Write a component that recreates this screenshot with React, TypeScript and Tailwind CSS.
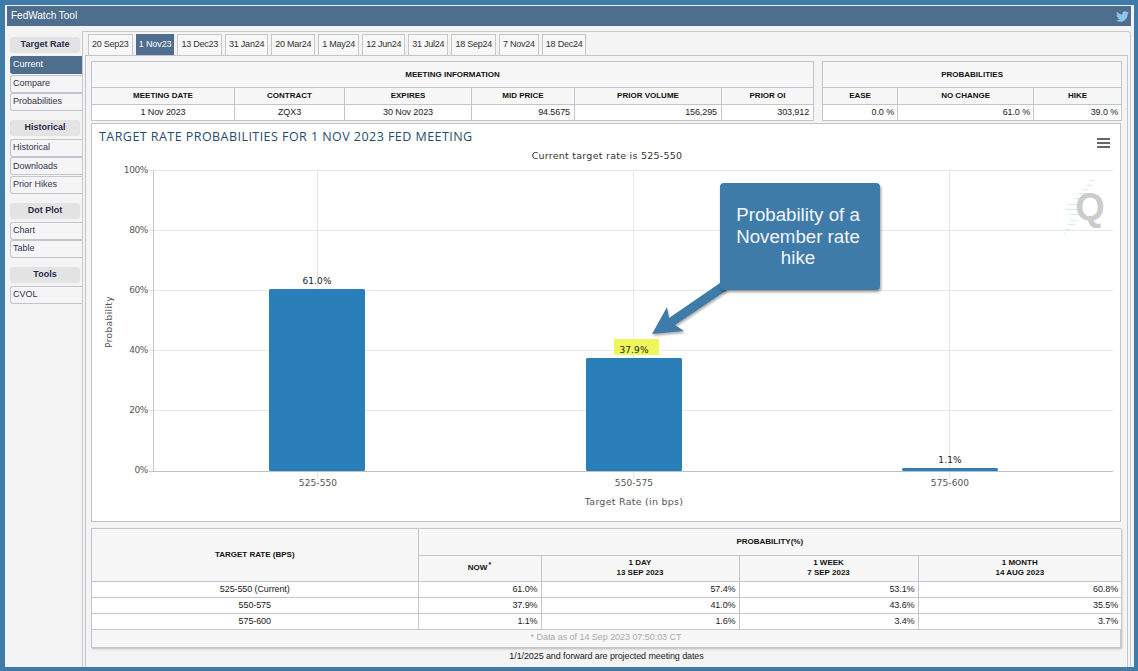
import { FaTwitter } from "react-icons/fa";

const navGroups = [
  { title: "Target Rate", items: ["Current", "Compare", "Probabilities"] },
  { title: "Historical", items: ["Historical", "Downloads", "Prior Hikes"] },
  { title: "Dot Plot", items: ["Chart", "Table"] },
  { title: "Tools", items: ["CVOL"] },
];

const tabs = ["20 Sep23", "1 Nov23", "13 Dec23", "31 Jan24", "20 Mar24", "1 May24", "12 Jun24", "31 Jul24", "18 Sep24", "7 Nov24", "18 Dec24"];

const th = "border border-[#c3c3d2] bg-[#f7f7f7] p-0 text-center text-[8px] font-bold leading-[10px] text-[#111]";
const td = "border border-[#c3c3d2] bg-white p-0 text-[9px] leading-none tracking-[-0.1px] text-[#222]";

const rows = [
  ["525-550 (Current)", "61.0%", "57.4%", "53.1%", "60.8%"],
  ["550-575", "37.9%", "41.0%", "43.6%", "35.5%"],
  ["575-600", "1.1%", "1.6%", "3.4%", "3.7%"],
];

function Sidebar() {
  return (
    <div className="w-[75px] shrink-0 pl-[3px] pt-[6px]">
      {navGroups.map((group) => (
        <div key={group.title} className="mb-[8.75px]">
          <div className="mr-[2px] mb-[3px] flex h-[16px] items-center justify-center rounded-[3px] bg-[#e3e3e3] text-[9px] font-bold text-[#2b2b4b]">
            {group.title}
          </div>
          {group.items.map((item) => (
            <div
              key={item}
              className={
                item === "Current"
                  ? "mb-[0.5px] flex h-[18px] items-center rounded-l-[3px] bg-[#4f6d8d] pl-[3px] text-[9px] text-white"
                  : "mb-[0.5px] flex h-[18px] items-center rounded-l-[3px] border border-r-0 border-[#c3c3d2] bg-[#f5f5f5] pl-[2px] text-[9px] text-[#33334f]"
              }
            >
              {item}
            </div>
          ))}
        </div>
      ))}
    </div>
  );
}

function InfoTables() {
  return (
    <div className="flex gap-[8px]">
      <table className="w-[722px] table-fixed border-collapse">
        <colgroup>
          <col className="w-[143px]" />
          <col className="w-[110px]" />
          <col className="w-[127px]" />
          <col className="w-[103px]" />
          <col className="w-[147px]" />
          <col className="w-[92px]" />
        </colgroup>
        <tbody>
          <tr className="h-[26px]">
            <th colSpan={6} className={th}>MEETING INFORMATION</th>
          </tr>
          <tr className="h-[17px]">
            <th className={th}>MEETING DATE</th>
            <th className={th}>CONTRACT</th>
            <th className={th}>EXPIRES</th>
            <th className={th}>MID PRICE</th>
            <th className={th}>PRIOR VOLUME</th>
            <th className={th}>PRIOR OI</th>
          </tr>
          <tr className="h-[16px]">
            <td className={`${td} text-center`}>1 Nov 2023</td>
            <td className={`${td} text-center`}>ZQX3</td>
            <td className={`${td} text-center`}>30 Nov 2023</td>
            <td className={`${td} pr-[4px] text-right`}>94.5675</td>
            <td className={`${td} pr-[4px] text-right`}>156,295</td>
            <td className={`${td} pr-[4px] text-right`}>303,912</td>
          </tr>
        </tbody>
      </table>
      <table className="w-[299px] table-fixed border-collapse">
        <colgroup>
          <col className="w-[75px]" />
          <col className="w-[136px]" />
          <col className="w-[88px]" />
        </colgroup>
        <tbody>
          <tr className="h-[26px]">
            <th colSpan={3} className={th}>PROBABILITIES</th>
          </tr>
          <tr className="h-[17px]">
            <th className={th}>EASE</th>
            <th className={th}>NO CHANGE</th>
            <th className={th}>HIKE</th>
          </tr>
          <tr className="h-[16px]">
            <td className={`${td} pr-[3px] text-right`}>0.0 %</td>
            <td className={`${td} pr-[3px] text-right`}>61.0 %</td>
            <td className={`${td} pr-[3px] text-right`}>39.0 %</td>
          </tr>
        </tbody>
      </table>
    </div>
  );
}

const gridYs = [170, 230, 290, 350, 410];
const yLabels = ["100%", "80%", "60%", "40%", "20%", "0%"];
const gridXs = [317, 633, 949];
const bars = [
  { x: 269, y: 289, label: "61.0%" },
  { x: 586, y: 358, label: "37.9%" },
  { x: 902, y: 468, label: "1.1%" },
];

// watermark streaks left of the Q: [y, x1, x2]
const streaks = [
  [180, 1090, 1093], [185, 1087, 1092], [189, 1083, 1088], [193, 1079, 1087],
  [198, 1074, 1079], [204, 1068, 1078], [209, 1065, 1078], [214, 1070, 1078],
  [220, 1070, 1077], [224, 1068, 1075], [229, 1066, 1070], [233, 1064, 1066],
];

function Chart() {
  const font = { fontFamily: "'DejaVu Sans', sans-serif" };
  return (
    <div className="relative mt-[2px] h-[399px] w-[1030px] border border-[#c4c4c4] bg-white">
      <svg width="1028" height="397" viewBox="92 124 1028 397" style={font} className="block">
        <text x="99" y="141" fontSize="12.5" fill="#274b6d" letterSpacing="0.45" style={{ fontFamily: "'Open Sans', sans-serif" }}>
          TARGET RATE PROBABILITIES FOR 1 NOV 2023 FED MEETING
        </text>
        <text x="607" y="159" fontSize="9.5" fill="#333" textAnchor="middle" letterSpacing="0.25">Current target rate is 525-550</text>
        <rect x="1097" y="138" width="13" height="2" fill="#666" />
        <rect x="1097" y="142" width="13" height="2" fill="#666" />
        <rect x="1097" y="146" width="13" height="2" fill="#666" />

        {gridYs.map((y) => (
          <line key={y} x1="149" x2="1113" y1={y + 0.5} y2={y + 0.5} stroke="#e8e8e8" />
        ))}
        {gridXs.map((x) => (
          <line key={x} x1={x + 0.5} x2={x + 0.5} y1="170" y2="479" stroke="#e6e6e6" />
        ))}
        <line x1="153.5" x2="153.5" y1="170" y2="471" stroke="#c8c8c8" />
        <line x1="149" x2="1113" y1="471.5" y2="471.5" stroke="#c0c0c0" />

        {streaks.map(([y, x1, x2]) => (
          <line key={y} x1={x1} x2={x2} y1={y + 0.5} y2={y + 0.5} stroke="#c9f0fa" />
        ))}
        <text x="1090" y="220" fontSize="38" fontWeight="bold" fill="#cccccc" textAnchor="middle" style={{ fontFamily: "'Liberation Sans', sans-serif" }}>Q</text>

        {yLabels.map((label, i) => (
          <text key={label} x="148" y={173 + i * 60} fontSize="9" fill="#555" textAnchor="end" letterSpacing="-0.4">{label}</text>
        ))}
        <text transform="translate(112 322) rotate(-90)" fontSize="9" fill="#555" textAnchor="middle" letterSpacing="0.4">Probability</text>

        <rect x="614" y="339" width="45" height="16" fill="#eef65a" />
        {bars.map((bar) => (
          <g key={bar.label}>
            <rect x={bar.x} y={bar.y} width="96" height={471 - bar.y} rx="1.5" fill="#2a7fb8" />
            <text x={bar.x + 48} y={bar.y - 5} fontSize="9" fill="#222" textAnchor="middle" letterSpacing="0.1">{bar.label}</text>
          </g>
        ))}

        <text x="318" y="486" fontSize="9" fill="#555" textAnchor="middle" letterSpacing="0.1">525-550</text>
        <text x="634" y="486" fontSize="9" fill="#555" textAnchor="middle" letterSpacing="0.1">550-575</text>
        <text x="950" y="486" fontSize="9" fill="#555" textAnchor="middle" letterSpacing="0.1">575-600</text>
        <text x="634" y="505" fontSize="9.5" fill="#555" textAnchor="middle" letterSpacing="0.25">Target Rate (in bps)</text>

        <polygon
          points="720,283 727,290 675,325 684,331 652,334 667,307 669,318"
          fill="#3f7ba8"
          style={{ filter: "drop-shadow(1px 2px 1px rgba(0,0,0,0.3))" }}
        />
      </svg>
      {/* callout sitting over the plot */}
      <div className="absolute left-[628px] top-[59px] flex h-[107px] w-[160px] items-center justify-center rounded-[4px] bg-[#3f7ba8] pr-[12px] pl-[8px] text-center text-[18.7px] leading-[21.7px] text-[#f2f6fa] shadow-[1px_2px_3px_rgba(0,0,0,0.4)]">
        Probability of a November rate hike
      </div>
    </div>
  );
}

function ProbabilityTable() {
  return (
    <div className="mt-[6px] w-[1030px] border border-[#c3c3d2] bg-[#f7f7f7] shadow-[1px_1px_2px_rgba(0,0,0,0.25)]">
      <table className="w-full table-fixed border-collapse">
        <colgroup>
          <col className="w-[326px]" />
          <col className="w-[123px]" />
          <col className="w-[198px]" />
          <col className="w-[179px]" />
          <col className="w-[203px]" />
        </colgroup>
        <tbody>
          <tr className="h-[26px]">
            <th rowSpan={2} className={`${th} border-t-0 border-l-0`}>TARGET RATE (BPS)</th>
            <th colSpan={4} className={`${th} border-t-0 border-r-0`}>PROBABILITY(%)</th>
          </tr>
          <tr className="h-[26px]">
            <th className={th}>NOW<sup className="ml-[1px] text-[7px]">*</sup></th>
            <th className={th}>1 DAY<br />13 SEP 2023</th>
            <th className={th}>1 WEEK<br />7 SEP 2023</th>
            <th className={`${th} border-r-0`}>1 MONTH<br />14 AUG 2023</th>
          </tr>
          {rows.map((row) => (
            <tr key={row[0]} className="h-[16px]">
              <td className={`${td} border-l-0 text-center`}>{row[0]}</td>
              <td className={`${td} bg-[#f9f9d2] pr-[3px] text-right`}>{row[1]}</td>
              <td className={`${td} pr-[3px] text-right`}>{row[2]}</td>
              <td className={`${td} pr-[3px] text-right`}>{row[3]}</td>
              <td className={`${td} border-r-0 pr-[3px] text-right`}>{row[4]}</td>
            </tr>
          ))}
        </tbody>
      </table>
      <div className="flex h-[17px] items-center justify-center text-[9px] tracking-[-0.05px] text-[#aaaaaa]">
        * Data as of 14 Sep 2023 07:50:03 CT
      </div>
    </div>
  );
}

export default function App() {
  return (
    <div className="h-[671px] w-[1138px] overflow-hidden bg-[#3f7ba8] pt-[5px] pr-[4px] pb-[4px] pl-[5px]" style={{ fontFamily: "'Liberation Sans', Arial, sans-serif" }}>
      <div className="flex h-full flex-col border-t border-[#eef2f5] bg-[#f4f4f4] pr-[3px] pl-[2px]">
        <div className="flex h-[20px] shrink-0 items-center justify-between bg-[#4f6d8d] pr-[2px] pb-[2px] pl-[4px] text-[10px] text-white">
          <span>FedWatch Tool</span>
          <FaTwitter className="mt-[2px] h-[13px] w-[13px] text-[#8cc4ec]" />
        </div>
        <div className="flex min-h-0 flex-1 pt-[5px]">
          <Sidebar />
          <div className="relative flex h-[636px] w-[1049px] flex-col rounded-tr-[3px] border border-b-0 border-[#c8c8c8]">
            <div className="flex h-[23px] gap-[3px] pt-[2px] pl-[5px]">
              {tabs.map((tab) => (
                <div
                  key={tab}
                  className={
                    tab === "1 Nov23"
                      ? "flex h-[21px] items-center border border-[#4f6d8d] bg-[#4f6d8d] px-[2px] text-[9px] tracking-[-0.1px] text-white"
                      : "flex h-[21px] items-center border border-b-0 border-[#c8c8c8] bg-[#f7f7f7] px-[3px] text-[9px] tracking-[-0.24px] text-[#333]"
                  }
                >
                  {tab}
                </div>
              ))}
            </div>
            <div className="ml-[2px] mr-[2px] flex-1 border border-b-0 border-[#c3c3d2] pt-[5px] pl-[5px]">
              <InfoTables />
              <Chart />
              <ProbabilityTable />
              <div className="pt-[2px] pr-[5px] text-center text-[9px] leading-[12px] tracking-[-0.1px] text-[#222]">
                1/1/2025 and forward are projected meeting dates
              </div>
            </div>
          </div>
        </div>
      </div>
    </div>
  );
}
